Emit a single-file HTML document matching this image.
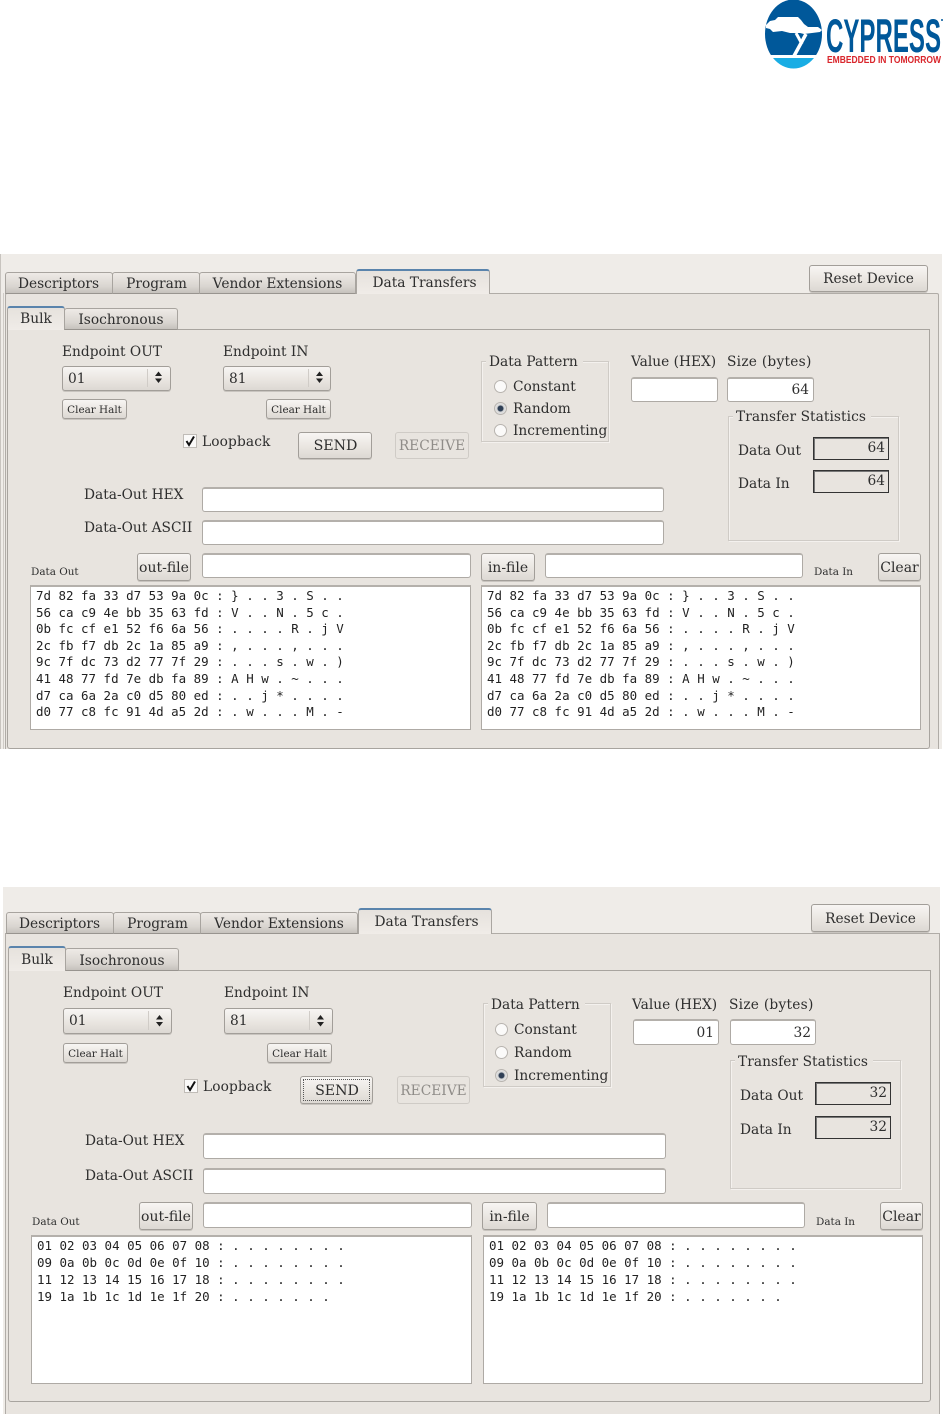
<!DOCTYPE html>
<html><head><meta charset="utf-8">
<style>
html,body{margin:0;padding:0;background:#fff;width:946px;height:1414px;overflow:hidden}
#r{position:relative;width:946px;height:1414px;overflow:hidden;font-family:"DejaVu Serif","Liberation Serif",serif;font-size:13.75px;color:#2e2e2e;filter:blur(.3px)}
#r div{position:absolute;box-sizing:border-box}
.t{white-space:nowrap;line-height:16px;height:16px}
.tab{background:linear-gradient(#eeeae6,#d8d4cf 70%,#c6c2bd);border:1px solid #a8a49f;border-bottom:1px solid #98948f;border-radius:3px 3px 0 0;text-align:center;line-height:22px;white-space:nowrap}
.act{background:linear-gradient(#e6e2dd,#f0ece8);border:1px solid #aaa6a1;border-bottom:0;border-top:2px solid #5a84ac;border-radius:3px 3px 0 0;text-align:center;line-height:24px;white-space:nowrap}
.btn{background:linear-gradient(#f7f5f3,#e8e4df 60%,#dcd8d3);border:1px solid #a29e99;border-radius:3px;text-align:center;white-space:nowrap;box-shadow:0 1px 0 #c8c4bf}
.ch{font-size:10.4px}
.in{background:#fff;border:1px solid #aeaaa5;border-top:2px solid #b4b0ab;border-radius:3px;text-align:right;white-space:nowrap;padding-right:4px}
.box{background:#fff;border:1px solid #aeaaa5;border-top:2px solid #b4b0ab;font-family:"DejaVu Sans Mono","Liberation Mono",monospace;font-size:12.47px;color:#222;white-space:pre;padding:0 0 0 5px}
.grp{border:1px solid #cfcbc6;box-shadow:inset 1px 1px 0 #f4f1ee,1px 1px 0 #f4f1ee}
.lg{background:#e8e4df;padding:0 5px 0 3px;white-space:nowrap;line-height:16px;height:16px}
.rad{width:13px;height:13px;border-radius:50%;background:#fbfaf9;border:1px solid #b8b4af}
.rad.on{background:radial-gradient(circle,#2f3f55 0,#2f3f55 2.5px,#d8d8d8 3.5px,#eee 100%)}
.sb{background:#e8e4df;border:1px solid #333;box-shadow:inset 1px 1px 0 #777;text-align:right;padding-right:3px;line-height:20px;white-space:nowrap}
.cb{width:14px;height:14px;background:#fbfaf9;border:1px solid #c0bcb7}
.line{width:1px;background:#d0ccc7}
.sm{font-size:10.4px}
</style></head><body><div id="r">

<!-- logo -->
<svg style="position:absolute;left:0;top:0" width="946" height="72" viewBox="0 0 946 72">
<defs><clipPath id="c"><ellipse cx="793.5" cy="34" rx="28.5" ry="34.5"/></clipPath></defs>
<g clip-path="url(#c)">
<rect x="760" y="-2" width="70" height="57" fill="#00589a"/>
<rect x="760" y="58" width="70" height="12" fill="#19ade4"/>
<path fill="#fff" d="M766 25 L770 21 L775 20 L778 17 L798 17 L801 20 L804 24 L808 27 L818 27 L822 30 L820 32 L812 33 L804 34 L800 33 L790 33 L782 31 L773 32 L770 29 L766 28 Z"/>
<path fill="none" stroke="#fff" stroke-width="3" d="M796 33 L802 44"/>
<path fill="none" stroke="#fff" stroke-width="3.5" d="M806 34 L794 56"/>
<rect x="760" y="55" width="70" height="3" fill="#fff"/>
</g>
<text x="826" y="52" font-family="Liberation Sans Narrow,Liberation Sans,sans-serif" font-weight="700" font-size="47" fill="#00589a" textLength="115" lengthAdjust="spacingAndGlyphs">CYPRESS</text>
<circle cx="942" cy="20" r="1" fill="#00589a"/>
<text x="827" y="63" font-family="Liberation Sans Narrow,Liberation Sans,sans-serif" font-size="9.7" fill="#d9262c" textLength="114" lengthAdjust="spacingAndGlyphs" font-weight="700">EMBEDDED IN TOMORROW</text>
</svg>

<!-- ================= PANEL 1 ================= -->
<div style="left:0;top:254px;width:1px;height:495px;background:#c8c4bf"></div>
<div style="left:1px;top:254px;width:941px;height:495px;background:#efece8"></div>
<div style="left:5px;top:293px;width:934px;height:456px;background:#e8e4df;border:1px solid #b0aca7;border-bottom:0;border-radius:2px 2px 0 0"></div>
<div style="left:3px;top:293px;width:1px;height:456px;background:#cfcbc6"></div>
<div style="left:7px;top:329px;width:923px;height:420px;background:#e8e4df;border:1px solid #a8a49f;border-radius:0 0 3px 3px"></div>

<div class="tab" style="left:5px;top:272px;width:108px;height:22px;padding-right:1px">Descriptors</div>
<div class="tab" style="left:112px;top:272px;width:88px;height:22px;padding-left:1px">Program</div>
<div class="tab" style="left:199px;top:272px;width:157px;height:22px">Vendor Extensions</div>
<div class="act" style="left:356px;top:269px;width:134px;height:25px;padding-left:3px">Data Transfers</div>
<div class="btn" style="left:809px;top:265px;width:119px;height:27px;line-height:27px">Reset Device</div>
<div class="act" style="left:7px;top:306px;width:58px;height:24px;line-height:22px">Bulk</div>
<div class="tab" style="left:64px;top:308px;width:114px;height:22px">Isochronous</div>

<div class="t" style="left:62px;top:344px">Endpoint OUT</div>
<div class="t" style="left:223px;top:344px">Endpoint IN</div>
<div class="btn" style="left:62px;top:366px;width:109px;height:25px;line-height:24px;text-align:left;padding-left:5px">01</div>
<div class="line" style="left:147px;top:369px;height:18px"></div>
<div class="btn" style="left:223px;top:366px;width:108px;height:25px;line-height:24px;text-align:left;padding-left:5px">81</div>
<div class="line" style="left:308px;top:369px;height:18px"></div>
<svg style="position:absolute;left:0;top:360px" width="340" height="30"><path fill="#222" d="M155 16 L158.5 11.5 L162 16Z M155 18.5 L158.5 23 L162 18.5Z M316 16 L319.5 11.5 L323 16Z M316 18.5 L319.5 23 L323 18.5Z"/></svg>
<div class="btn ch" style="left:62px;top:399px;width:65px;height:20px;line-height:21px">Clear Halt</div>
<div class="btn ch" style="left:266px;top:399px;width:65px;height:20px;line-height:21px">Clear Halt</div>
<div class="cb" style="left:183px;top:434px"></div>
<svg style="position:absolute;left:183px;top:434px" width="14" height="14"><path d="M3.5 7 L6 11 L11 2.5" fill="none" stroke="#111" stroke-width="2"/></svg>
<div class="t" style="left:202px;top:434px;letter-spacing:.12px">Loopback</div>
<div class="btn" style="left:298px;top:432px;width:74px;height:27px;line-height:26px;padding-left:1px;font-size:14.2px">SEND</div>
<div class="btn" style="left:395px;top:432px;width:74px;height:27px;line-height:26px;color:#8f8c88;background:#e8e4df;border-color:#cfcbc6;box-shadow:none">RECEIVE</div>

<div class="grp" style="left:481px;top:361px;width:128px;height:81px"></div>
<div class="lg" style="left:486px;top:354px">Data Pattern</div>
<div class="rad" style="left:494px;top:380px"></div>
<div class="rad on" style="left:494px;top:402px"></div>
<div class="rad" style="left:494px;top:424px"></div>
<div class="t" style="left:513px;top:379px">Constant</div>
<div class="t" style="left:513px;top:401px">Random</div>
<div class="t" style="left:513px;top:423px">Incrementing</div>

<div class="t" style="left:631px;top:354px">Value (HEX)</div>
<div class="t" style="left:727px;top:354px;letter-spacing:.25px">Size (bytes)</div>
<div class="in" style="left:631px;top:377px;width:87px;height:25px;line-height:23px"></div>
<div class="in" style="left:727px;top:377px;width:87px;height:25px;line-height:22px">64</div>

<div class="grp" style="left:728px;top:416px;width:171px;height:125px"></div>
<div class="lg" style="left:733px;top:409px;letter-spacing:.06px">Transfer Statistics</div>
<div class="t" style="left:738px;top:443px">Data Out</div>
<div class="t" style="left:738px;top:476px">Data In</div>
<div class="sb" style="left:813px;top:437px;width:76px;height:23px">64</div>
<div class="sb" style="left:813px;top:470px;width:76px;height:23px">64</div>

<div class="t" style="left:84px;top:487px">Data-Out HEX</div>
<div class="t" style="left:84px;top:520px">Data-Out ASCII</div>
<div class="in" style="left:202px;top:487px;width:462px;height:25px"></div>
<div class="in" style="left:202px;top:520px;width:462px;height:25px"></div>

<div class="t sm" style="left:31px;top:564px">Data Out</div>
<div class="btn" style="left:137px;top:553px;width:54px;height:28px;line-height:29px;font-size:14px">out-file</div>
<div class="in" style="left:202px;top:553px;width:269px;height:25px"></div>
<div class="btn" style="left:481px;top:553px;width:54px;height:28px;line-height:29px;font-size:14px">in-file</div>
<div class="in" style="left:545px;top:553px;width:258px;height:25px"></div>
<div class="t sm" style="left:814px;top:564px">Data In</div>
<div class="btn" style="left:878px;top:553px;width:43px;height:28px;line-height:29px;font-size:14px">Clear</div>

<div class="box" style="left:30px;top:585px;width:441px;height:145px;line-height:16.6px;padding-top:1px">7d 82 fa 33 d7 53 9a 0c : } . . 3 . S . .
56 ca c9 4e bb 35 63 fd : V . . N . 5 c .
0b fc cf e1 52 f6 6a 56 : . . . . R . j V
2c fb f7 db 2c 1a 85 a9 : , . . . , . . .
9c 7f dc 73 d2 77 7f 29 : . . . s . w . )
41 48 77 fd 7e db fa 89 : A H w . ~ . . .
d7 ca 6a 2a c0 d5 80 ed : . . j * . . . .
d0 77 c8 fc 91 4d a5 2d : . w . . . M . -</div>
<div class="box" style="left:481px;top:585px;width:440px;height:145px;line-height:16.6px;padding-top:1px">7d 82 fa 33 d7 53 9a 0c : } . . 3 . S . .
56 ca c9 4e bb 35 63 fd : V . . N . 5 c .
0b fc cf e1 52 f6 6a 56 : . . . . R . j V
2c fb f7 db 2c 1a 85 a9 : , . . . , . . .
9c 7f dc 73 d2 77 7f 29 : . . . s . w . )
41 48 77 fd 7e db fa 89 : A H w . ~ . . .
d7 ca 6a 2a c0 d5 80 ed : . . j * . . . .
d0 77 c8 fc 91 4d a5 2d : . w . . . M . -</div>

<!-- ================= PANEL 2 ================= -->
<div style="left:3px;top:887px;width:937px;height:527px;background:#efece8"></div>
<div style="left:5px;top:933px;width:935px;height:481px;background:#e8e4df;border:1px solid #b0aca7;border-bottom:0"></div>
<div style="left:8px;top:970px;width:923px;height:432px;background:#e8e4df;border:1px solid #a8a49f;border-radius:0 0 3px 3px"></div>

<div class="tab" style="left:6px;top:912px;width:108px;height:22px;padding-right:1px">Descriptors</div>
<div class="tab" style="left:113px;top:912px;width:88px;height:22px;padding-left:1px">Program</div>
<div class="tab" style="left:200px;top:912px;width:158px;height:22px">Vendor Extensions</div>
<div class="act" style="left:358px;top:908px;width:134px;height:26px;padding-left:3px">Data Transfers</div>
<div class="btn" style="left:811px;top:904px;width:119px;height:28px;line-height:29px">Reset Device</div>
<div class="act" style="left:8px;top:946px;width:58px;height:25px;line-height:25px">Bulk</div>
<div class="tab" style="left:65px;top:948px;width:114px;height:23px;line-height:25px">Isochronous</div>

<div class="t" style="left:63px;top:985px">Endpoint OUT</div>
<div class="t" style="left:224px;top:985px">Endpoint IN</div>
<div class="btn" style="left:63px;top:1008px;width:109px;height:26px;line-height:25px;text-align:left;padding-left:5px">01</div>
<div class="line" style="left:148px;top:1011px;height:19px"></div>
<div class="btn" style="left:224px;top:1008px;width:109px;height:26px;line-height:25px;text-align:left;padding-left:5px">81</div>
<div class="line" style="left:309px;top:1011px;height:19px"></div>
<svg style="position:absolute;left:0;top:1000px" width="340" height="32"><path fill="#222" d="M156 19.5 L159.5 15 L163 19.5Z M156 22 L159.5 26.5 L163 22Z M317 19.5 L320.5 15 L324 19.5Z M317 22 L320.5 26.5 L324 22Z"/></svg>
<div class="btn ch" style="left:63px;top:1043px;width:65px;height:20px;line-height:21px">Clear Halt</div>
<div class="btn ch" style="left:267px;top:1043px;width:65px;height:20px;line-height:21px">Clear Halt</div>
<div class="cb" style="left:184px;top:1079px"></div>
<svg style="position:absolute;left:184px;top:1079px" width="14" height="14"><path d="M3.5 7 L6 11 L11 2.5" fill="none" stroke="#111" stroke-width="2"/></svg>
<div class="t" style="left:203px;top:1079px;letter-spacing:.12px">Loopback</div>
<div class="btn" style="left:300px;top:1076px;width:73px;height:28px;line-height:29px;padding-left:1px;font-size:14.2px">SEND</div>
<div style="left:303px;top:1079px;width:67px;height:22px;border:1px dotted #555"></div>
<div class="btn" style="left:397px;top:1076px;width:73px;height:28px;line-height:29px;color:#8f8c88;background:#e8e4df;border-color:#cfcbc6;box-shadow:none">RECEIVE</div>

<div class="grp" style="left:483px;top:1003px;width:128px;height:84px"></div>
<div class="lg" style="left:488px;top:997px">Data Pattern</div>
<div class="rad" style="left:495px;top:1023px"></div>
<div class="rad" style="left:495px;top:1046px"></div>
<div class="rad on" style="left:495px;top:1069px"></div>
<div class="t" style="left:514px;top:1022px">Constant</div>
<div class="t" style="left:514px;top:1045px">Random</div>
<div class="t" style="left:514px;top:1068px">Incrementing</div>

<div class="t" style="left:632px;top:997px">Value (HEX)</div>
<div class="t" style="left:729px;top:997px;letter-spacing:.25px">Size (bytes)</div>
<div class="in" style="left:633px;top:1019px;width:86px;height:26px;line-height:24px">01</div>
<div class="in" style="left:730px;top:1019px;width:86px;height:26px;line-height:24px">32</div>

<div class="grp" style="left:730px;top:1060px;width:171px;height:129px"></div>
<div class="lg" style="left:735px;top:1054px;letter-spacing:.06px">Transfer Statistics</div>
<div class="t" style="left:740px;top:1088px">Data Out</div>
<div class="t" style="left:740px;top:1122px">Data In</div>
<div class="sb" style="left:815px;top:1082px;width:76px;height:23px">32</div>
<div class="sb" style="left:815px;top:1116px;width:76px;height:23px">32</div>

<div class="t" style="left:85px;top:1133px">Data-Out HEX</div>
<div class="t" style="left:85px;top:1168px">Data-Out ASCII</div>
<div class="in" style="left:203px;top:1133px;width:463px;height:26px"></div>
<div class="in" style="left:203px;top:1168px;width:463px;height:26px"></div>

<div class="t sm" style="left:32px;top:1214px">Data Out</div>
<div class="btn" style="left:139px;top:1202px;width:54px;height:28px;line-height:29px;font-size:14px">out-file</div>
<div class="in" style="left:203px;top:1202px;width:269px;height:26px"></div>
<div class="btn" style="left:482px;top:1202px;width:55px;height:28px;line-height:29px;font-size:14px">in-file</div>
<div class="in" style="left:547px;top:1202px;width:258px;height:26px"></div>
<div class="t sm" style="left:816px;top:1214px">Data In</div>
<div class="btn" style="left:880px;top:1202px;width:43px;height:28px;line-height:29px;font-size:14px">Clear</div>

<div class="box" style="left:31px;top:1235px;width:441px;height:149px;line-height:17px">01 02 03 04 05 06 07 08 : . . . . . . . .
09 0a 0b 0c 0d 0e 0f 10 : . . . . . . . .
11 12 13 14 15 16 17 18 : . . . . . . . .
19 1a 1b 1c 1d 1e 1f 20 : . . . . . . .</div>
<div class="box" style="left:483px;top:1235px;width:440px;height:149px;line-height:17px">01 02 03 04 05 06 07 08 : . . . . . . . .
09 0a 0b 0c 0d 0e 0f 10 : . . . . . . . .
11 12 13 14 15 16 17 18 : . . . . . . . .
19 1a 1b 1c 1d 1e 1f 20 : . . . . . . .</div>

</div></body></html>
